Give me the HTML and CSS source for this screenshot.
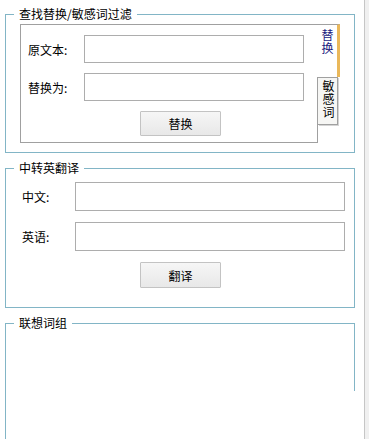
FILE: index.html
```html
<!DOCTYPE html>
<html lang="zh-CN">
<head>
    <meta charset="UTF-8">
    <meta name="viewport" content="width=device-width, initial-scale=1.0">
    <title>查找替换</title>
    <link rel="stylesheet" href="styles.css">
</head>
<body>
    <div class="page">
        <!-- 查找替换 / 敏感词过滤 -->
        <fieldset class="group group-replace">
            <legend>查找替换/敏感词过滤</legend>
            <div class="tabs">
                <div class="tab-panel">
                    <div class="row">
                        <label for="srcText">原文本:</label>
                        <input type="text" id="srcText">
                    </div>
                    <div class="row">
                        <label for="dstText">替换为:</label>
                        <input type="text" id="dstText">
                    </div>
                    <button class="btn">替换</button>
                </div>
                <div class="tab-list">
                    <div class="tab active">替换</div>
                    <div class="tab">敏感词</div>
                </div>
            </div>
        </fieldset>

        <!-- 中转英 -->
        <fieldset class="group group-translate">
            <legend>中转英翻译</legend>
            <div class="row">
                <label for="zhText">中文:</label>
                <input type="text" id="zhText">
            </div>
            <div class="row">
                <label for="enText">英语:</label>
                <input type="text" id="enText">
            </div>
            <button class="btn">翻译</button>
        </fieldset>

        <!-- 联想词组 -->
        <fieldset class="group group-words">
            <legend>联想词组</legend>
        </fieldset>
    </div>
</body>
</html>
```

FILE: styles.css
```css
html, body {
    margin: 0;
    height: 100%;
    overflow: hidden;
}
body {
    background-color: #f0f0f0;
    font-family: "Noto Sans CJK SC", "Noto Sans", sans-serif;
    font-size: 12px;
    color: #000;
}
.page {
    width: 365px;
    height: 439px;
    box-sizing: border-box;
    padding-top: 6px;
    background-color: #fff;
    border-right: 1px solid #c6c6c6;
    overflow: hidden;
}

/* group boxes */
.group {
    width: 350px;
    box-sizing: border-box;
    margin: 0 0 7px 5px;
    border: 1px solid #82b5c6;
    padding: 0 9px 0 8px;
    min-width: 0;
}
.group legend {
    padding: 0 5px;
    line-height: 16px;
}
.row {
    display: flex;
    align-items: center;
}
.row label {
    box-sizing: border-box;
}
.row input {
    box-sizing: border-box;
    border: 1px solid #adadad;
    padding: 0 3px;
    margin: 0;
    font: inherit;
    background: #fff;
    outline: none;
}
.btn {
    display: block;
    box-sizing: border-box;
    width: 81px;
    padding: 0;
    font: inherit;
    color: #000;
    background: linear-gradient(#f6f6f6, #e8e8e8);
    border: 1px solid #c3c3c3;
    border-radius: 1px;
}

/* replace group with side tabs */
.group-replace {
    padding-top: 2px;
    padding-bottom: 9px;
}
.tabs {
    display: flex;
    align-items: flex-start;
    margin-left: 6px;
}
.tab-panel {
    width: 298px;
    height: 119px;
    box-sizing: border-box;
    border: 1px solid #a0a0a0;
    padding-top: 10px;
    display: flex;
    flex-direction: column;
    gap: 10px;
}
.tab-panel label {
    width: 63px;
    padding-left: 7px;
}
.tab-panel input {
    width: 220px;
    height: 28px;
}
.tab-panel .btn {
    height: 25px;
    margin-left: 119px;
}
.tab-list {
    display: flex;
    flex-direction: column;
    margin-left: -1px;
}
.tab {
    writing-mode: vertical-rl;
    text-orientation: upright;
    line-height: 20px;
    box-sizing: border-box;
    letter-spacing: 1px;
}
.tab.active {
    position: relative;
    z-index: 1;
    width: 23px;
    height: 53px;
    padding-top: 4px;
    color: #1a1a7e;
    background-color: #fff;
    border-top: 1px solid #a0a0a0;
    border-right: 3px solid #eab85a;
}
.tab:not(.active) {
    width: 20px;
    height: 48px;
    margin-left: 1px;
    padding-top: 2px;
    line-height: 18px;
    background-color: #f6f6f4;
    border: 1px solid #a0a0a0;
    border-left: none;
    box-shadow: 1px 1px 0 #d4d4d4;
}

/* translate group */
.group-translate {
    padding-top: 6px;
    padding-bottom: 19px;
}
.group-translate .row + .row {
    margin-top: 11px;
}
.group-translate label {
    width: 61px;
    padding-left: 8px;
}
.group-translate input {
    width: 270px;
    height: 29px;
}
.group-translate .btn {
    height: 26px;
    margin: 11px 0 0 126px;
}

/* word list group, right edge is cut short */
.group-words {
    position: relative;
    height: 150px;
}
.group-words::after {
    content: "";
    position: absolute;
    right: -1px;
    top: 60px;
    bottom: -1px;
    width: 1px;
    background-color: #fff;
}
```
